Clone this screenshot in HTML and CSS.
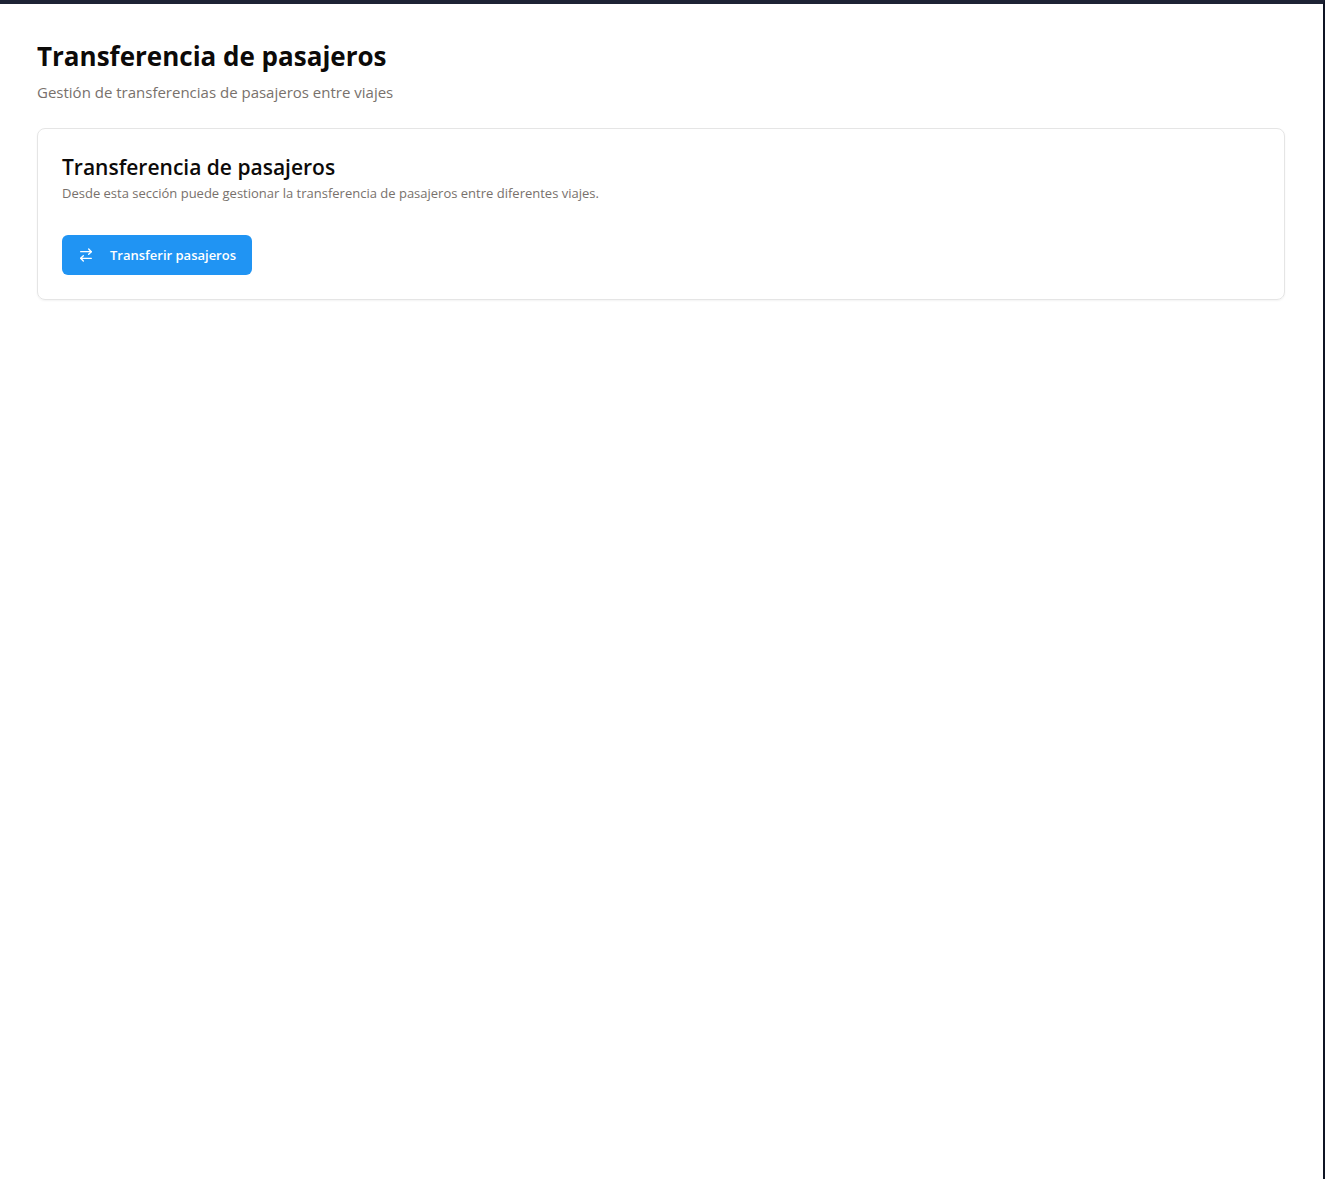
FILE: index.html
```html
<!DOCTYPE html>
<html lang="es">
<head>
<meta charset="utf-8">
<meta name="viewport" content="width=device-width, initial-scale=1">
<title>Transferencia de pasajeros</title>
<link rel="stylesheet" href="styles.css">
</head>
<body>
<main class="page">
  <header class="page-header">
    <h1 class="page-title">Transferencia de pasajeros</h1>
    <p class="page-subtitle">Gestión de transferencias de pasajeros entre viajes</p>
  </header>
  <section class="card">
    <div class="card-header">
      <h2 class="card-title">Transferencia de pasajeros</h2>
      <p class="card-description">Desde esta sección puede gestionar la transferencia de pasajeros entre diferentes viajes.</p>
    </div>
    <button class="button" type="button">
      <svg class="button-icon" viewBox="0 0 24 24" aria-hidden="true"><path d="m16 3 4 4-4 4"/><path d="M20 7H4"/><path d="m8 21-4-4 4-4"/><path d="M4 17h16"/></svg>
      Transferir pasajeros
    </button>
  </section>
</main>
</body>
</html>
```

FILE: styles.css
```css
* {
  box-sizing: border-box;
}

body {
  margin: 0;
  min-height: 100vh;
  border-top: 4px solid #1d2335;
  border-right: 2px solid #0f1424;
  background: #fff;
  color: #0c0a09;
  font-family: "Segoe UI", "Open Sans", "Noto Sans", sans-serif;
}

h1,
h2,
p {
  margin: 0;
}

.page {
  padding: 32px 38px 32px 37px;
}

.page-header {
  display: grid;
  gap: 4px;
  margin-bottom: 24px;
}

.page-title {
  font-size: 26px;
  line-height: 40px;
  font-weight: 700;
}

.page-subtitle {
  font-size: 15px;
  line-height: 24px;
  color: #78716c;
}

.card {
  padding: 24px;
  border: 1px solid #e5e5e5;
  border-radius: 8px;
  box-shadow: 0 1px 2px rgb(0 0 0 / 5%);
}

.card-header {
  display: grid;
  gap: 2px;
  margin-bottom: 32px;
}

.card-title {
  font-size: 21px;
  line-height: 28px;
  font-weight: 600;
}

.card-description {
  font-size: 13px;
  line-height: 20px;
  color: #78716c;
}

.button {
  display: flex;
  align-items: center;
  gap: 16px;
  height: 40px;
  padding: 0 16px;
  border: 0;
  border-radius: 6px;
  background: #2094f3;
  color: #fff;
  font: 600 13px/20px "Segoe UI", "Open Sans", "Noto Sans", sans-serif;
  cursor: pointer;
}

.button-icon {
  width: 16px;
  height: 16px;
  fill: none;
  stroke: currentColor;
  stroke-width: 2;
  stroke-linecap: round;
  stroke-linejoin: round;
}
```
